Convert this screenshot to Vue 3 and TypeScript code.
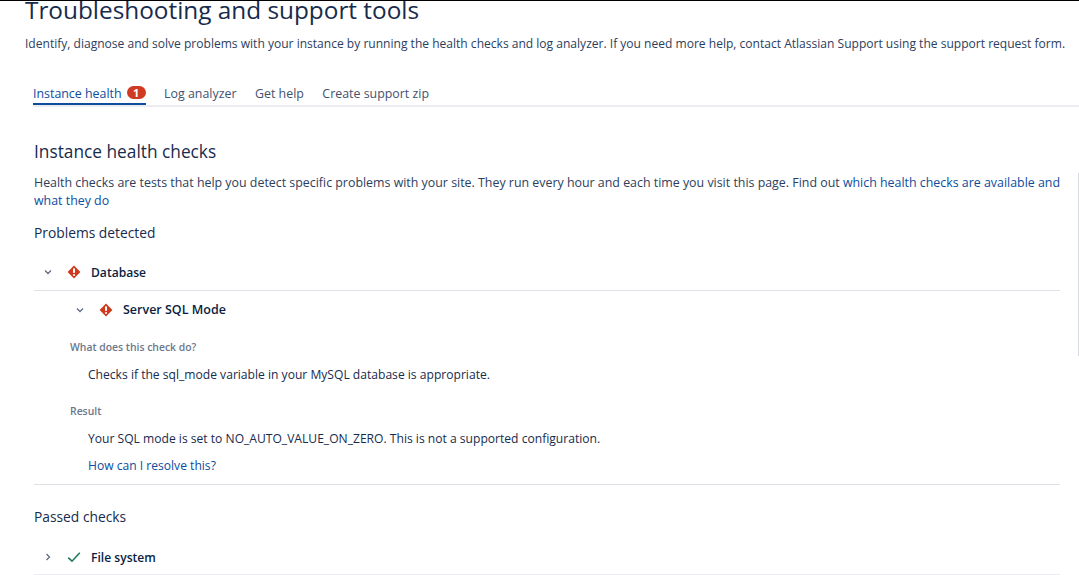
<script setup lang="ts">
const tabs = ["Log analyzer", "Get help", "Create support zip"];
</script>

<template>
	<div class="page">
		<h1 class="title">Troubleshooting and support tools</h1>
		<p class="intro">
			Identify, diagnose and solve problems with your instance by running the health checks and log analyzer. If you need more help, contact Atlassian Support using the support request form.
		</p>

		<nav class="tabs">
			<a class="tab tab--active">
				Instance health
				<span class="badge">1</span>
			</a>
			<a v-for="tab in tabs" :key="tab" class="tab">{{ tab }}</a>
		</nav>

		<main class="content">
			<h2 class="heading">Instance health checks</h2>
			<p class="desc">
				Health checks are tests that help you detect specific problems with your site. They run every hour and each time you visit this page. Find out
				<a class="link">which health checks are available and what they do</a>
			</p>

			<h3 class="section">Problems detected</h3>

			<div class="row row--group">
				<svg class="chevron" viewBox="0 0 10 10"><path d="M2 3.5 5 6.5 8 3.5" /></svg>
				<svg class="status" viewBox="0 0 14 14">
					<path class="diamond" d="M7 .6 13.4 7 7 13.4 .6 7z" />
					<rect class="mark" x="6" y="3.2" width="2" height="4.8" rx=".8" />
					<circle class="mark" cx="7" cy="10" r="1.1" />
				</svg>
				<strong>Database</strong>
			</div>

			<div class="check">
				<div class="row row--check">
					<svg class="chevron" viewBox="0 0 10 10"><path d="M2 3.5 5 6.5 8 3.5" /></svg>
					<svg class="status" viewBox="0 0 14 14">
						<path class="diamond" d="M7 .6 13.4 7 7 13.4 .6 7z" />
						<rect class="mark" x="6" y="3.2" width="2" height="4.8" rx=".8" />
						<circle class="mark" cx="7" cy="10" r="1.1" />
					</svg>
					<strong class="check-name">Server SQL Mode</strong>
				</div>

				<div class="label label--first">What does this check do?</div>
				<p class="value">Checks if the sql_mode variable in your MySQL database is appropriate.</p>

				<div class="label label--result">Result</div>
				<p class="value">Your SQL mode is set to NO_AUTO_VALUE_ON_ZERO. This is not a supported configuration.</p>
				<p class="value value--link"><a class="link">How can I resolve this?</a></p>
			</div>

			<h3 class="section section--passed">Passed checks</h3>

			<div class="row row--group row--last">
				<svg class="chevron" viewBox="0 0 10 10"><path d="M3.5 2 6.5 5 3.5 8" /></svg>
				<svg class="status status--ok" viewBox="0 0 14 14"><path d="M1.2 7.6 5 11.2 12.8 2.8" /></svg>
				<strong>File system</strong>
			</div>
		</main>
		<div class="edge"></div>
	</div>
</template>

<style scoped>
.page {
	position: relative;
	height: 575px;
	box-sizing: border-box;
	overflow: hidden;
	border-top: 1px solid #000;
	padding: 0 19px 0 25px;
	background: #fff;
	color: #172b4d;
	font-family: "Open Sans", "Noto Sans", sans-serif;
	font-size: 12.4px;
}

.title {
	margin: -7px 0 0;
	font-size: 24.35px;
	line-height: 32px;
	font-weight: 400;
	white-space: nowrap;
}

.intro {
	margin: 8px -19px 0 0;
	font-size: 12.05px;
	line-height: 20px;
	white-space: nowrap;
	color: #2c3e5d;
}

.tabs {
	display: flex;
	gap: 18.5px;
	margin: 21px -19px 0 8px;
	border-bottom: 2px solid #ebecf0;
	height: 30px;
}

.tab {
	display: flex;
	align-items: center;
	gap: 5px;
	height: 30px;
	box-sizing: border-box;
	padding-top: 9px;
	border-bottom: 2px solid transparent;
	color: #42526e;
	font-size: 12.4px;
}

.tab--active {
	color: #0c4d9e;
	border-bottom-color: #0c4d9e;
}

.badge {
	width: 19px;
	height: 13px;
	margin-bottom: 2px;
	border-radius: 7px;
	background: #cf3a22;
	color: #fff;
	font-size: 11px;
	line-height: 13px;
	font-weight: 700;
	text-align: center;
}

.content {
	padding-left: 9px;
}

.heading {
	margin: 33px 0 0;
	font-size: 17.3px;
	line-height: 24px;
	font-weight: 400;
}

.desc {
	margin: 10px 0 0;
	line-height: 18px;
	color: #2c3e5d;
}

.link {
	color: #0c4d9e;
}

.section {
	margin: 13px 0 0;
	font-size: 13.8px;
	line-height: 20px;
	font-weight: 400;
}

.section--passed {
	margin-top: 22px;
}

.row {
	display: flex;
	align-items: center;
	color: #091e42;
	font-size: 12.1px;
}

.row strong {
	font-weight: 600;
}

.row .check-name {
	font-size: 12.5px;
}

.row--group {
	height: 36px;
	margin-top: 11px;
	padding-left: 9px;
	border-bottom: 1px solid #dfe1e6;
}

.row--last {
	height: 34px;
	margin-top: 13px;
	border-bottom-color: #ebecf0;
}

.row--check {
	height: 37px;
	padding-left: 41px;
}

.chevron {
	width: 10px;
	height: 10px;
	margin-right: 14px;
	fill: none;
	stroke: #5e6c84;
	stroke-width: 1.3;
}

.status {
	width: 14px;
	height: 14px;
	margin-right: 10px;
}

.diamond {
	fill: #cf3a1e;
}

.mark {
	fill: #fff;
}

.status--ok path {
	fill: none;
	stroke: #1f7a5c;
	stroke-width: 1.6;
}

.check {
	border-bottom: 1px solid #dfe1e6;
	padding-bottom: 9px;
}

.label {
	padding-left: 36px;
	color: #6b778c;
	font-size: 10.4px;
	line-height: 16px;
	font-weight: 600;
}

.label--first {
	margin-top: 11px;
}

.label--result {
	margin-top: 19px;
}

.value {
	margin: 10px 0 0;
	padding-left: 54px;
	font-size: 12.1px;
	line-height: 19px;
}

.value--link {
	margin-top: 8px;
}

.edge {
	position: absolute;
	top: 172px;
	right: 0;
	width: 1px;
	height: 183px;
	background: #d8dade;
}
</style>
